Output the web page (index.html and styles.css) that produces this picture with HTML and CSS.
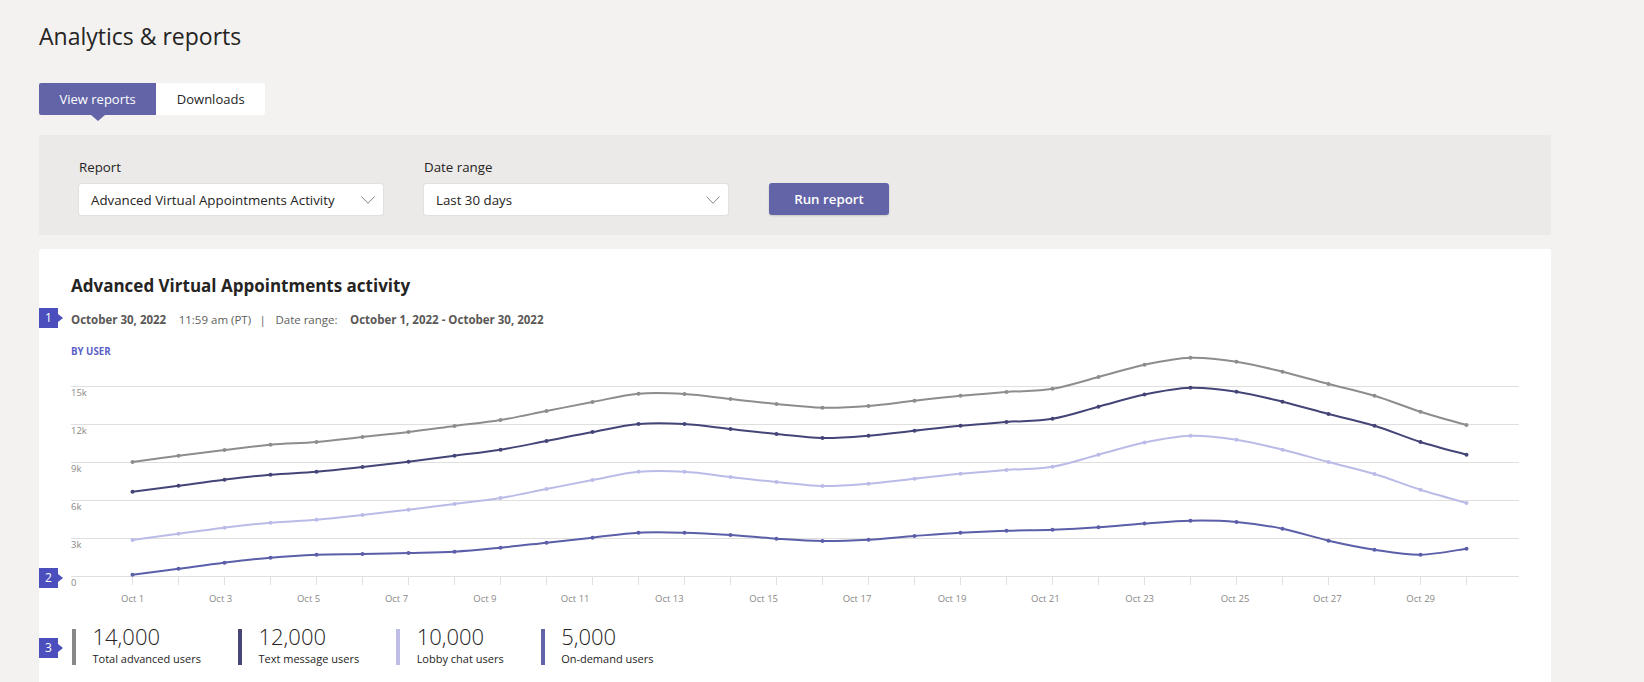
FILE: index.html
```html
<!DOCTYPE html>
<html lang="en">
<head>
<meta charset="utf-8">
<title>Analytics &amp; reports</title>
<link rel="stylesheet" href="styles.css">
</head>
<body>
<main class="page">
  <h1 class="page-title">Analytics &amp; reports</h1>
  <nav class="tabs">
    <button class="tab tab-active">View reports</button>
    <button class="tab tab-last">Downloads</button>
  </nav>

  <section class="filters">
    <div class="field">
      <label class="field-label">Report</label>
      <div class="select">
        <span class="select-value">Advanced Virtual Appointments Activity</span>
        <svg class="chev" width="14" height="8" viewBox="0 0 14 8"><polyline points="0.5,0.5 7,7.3 13.5,0.5"/></svg>
      </div>
    </div>
    <div class="field">
      <label class="field-label">Date range</label>
      <div class="select">
        <span class="select-value">Last 30 days</span>
        <svg class="chev" width="14" height="8" viewBox="0 0 14 8"><polyline points="0.5,0.5 7,7.3 13.5,0.5"/></svg>
      </div>
    </div>
    <button class="run-btn">Run report</button>
  </section>

  <section class="card">
    <h2 class="card-title">Advanced Virtual Appointments activity</h2>
    <div class="meta">
      <span class="badge badge-meta">1</span>
      <span class="meta-strong">October 30, 2022</span>
      <span>11:59 am (PT)</span>
      <span class="meta-pipe">|</span>
      <span>Date range:</span>
      <span class="meta-strong">October 1, 2022 - October 30, 2022</span>
    </div>
    <div class="by-user">BY USER</div>

    <div class="chart">
      <span class="badge badge-chart">2</span>
      <svg class="chart-svg" id="chart" viewBox="71 360 1448 250" width="1448" height="250">
        <g class="grid">
          <line x1="71" x2="1519" y1="386.5" y2="386.5"/>
          <line x1="71" x2="1519" y1="424.5" y2="424.5"/>
          <line x1="71" x2="1519" y1="462.5" y2="462.5"/>
          <line x1="71" x2="1519" y1="500.5" y2="500.5"/>
          <line x1="71" x2="1519" y1="538.5" y2="538.5"/>
          <line x1="71" x2="1519" y1="576.5" y2="576.5"/>
          <path id="ticks" d=""/>
        </g>
        <g class="y-labels">
          <text x="71" y="396">15k</text>
          <text x="71" y="434">12k</text>
          <text x="71" y="472">9k</text>
          <text x="71" y="510">6k</text>
          <text x="71" y="548">3k</text>
          <text x="71" y="586">0</text>
        </g>
        <g class="x-labels">
          <text x="132.7" y="602">Oct 1</text>
          <text x="220.6" y="602">Oct 3</text>
          <text x="308.6" y="602">Oct 5</text>
          <text x="396.5" y="602">Oct 7</text>
          <text x="484.9" y="602">Oct 9</text>
          <text x="575.2" y="602">Oct 11</text>
          <text x="669.4" y="602">Oct 13</text>
          <text x="763.7" y="602">Oct 15</text>
          <text x="857" y="602">Oct 17</text>
          <text x="952" y="602">Oct 19</text>
          <text x="1045.4" y="602">Oct 21</text>
          <text x="1139.7" y="602">Oct 23</text>
          <text x="1235" y="602">Oct 25</text>
          <text x="1327.4" y="602">Oct 27</text>
          <text x="1420.7" y="602">Oct 29</text>
        </g>
        <g id="series"></g>
      </svg>
    </div>

    <div class="legend">
      <span class="badge badge-legend">3</span>
      <div class="legend-item">
        <span class="legend-bar bar-total"></span>
        <div class="legend-text">
          <div class="legend-num">14,000</div>
          <div class="legend-label">Total advanced users</div>
        </div>
      </div>
      <div class="legend-item">
        <span class="legend-bar bar-text"></span>
        <div class="legend-text">
          <div class="legend-num">12,000</div>
          <div class="legend-label">Text message users</div>
        </div>
      </div>
      <div class="legend-item">
        <span class="legend-bar bar-lobby"></span>
        <div class="legend-text">
          <div class="legend-num">10,000</div>
          <div class="legend-label">Lobby chat users</div>
        </div>
      </div>
      <div class="legend-item">
        <span class="legend-bar bar-demand"></span>
        <div class="legend-text">
          <div class="legend-num">5,000</div>
          <div class="legend-label">On-demand users</div>
        </div>
      </div>
    </div>
  </section>
</main>
<script src="script.js"></script>
</body>
</html>
```

FILE: styles.css
```css
* { box-sizing: border-box; }
html, body { margin: 0; }
body {
  background: #f3f2f1;
  font-family: "Open Sans", "Noto Sans", "Liberation Sans", sans-serif;
  color: #252423;
}
.page { padding: 20px 93px 0 39px; }

.page-title {
  margin: 0;
  font-size: 23px;
  line-height: 32px;
  font-weight: 400;
  color: #252423;
}

.tabs { display: flex; margin-top: 31px; }
.tab {
  position: relative;
  height: 32px;
  padding: 0 20.5px;
  border: 0;
  margin: 0;
  font-family: inherit;
  font-size: 13px;
  line-height: 32px;
  background: #fff;
  color: #252423;
}
.tab-active { background: #6264a7; color: #fff; border-radius: 2px 0 0 2px; }
.tab-active::after {
  content: "";
  position: absolute;
  left: 50%;
  top: 100%;
  margin-left: -7px;
  border-left: 7px solid transparent;
  border-right: 7px solid transparent;
  border-top: 6px solid #6264a7;
}
.tab-last { border-radius: 0 3px 3px 0; }

.filters {
  margin-top: 20px;
  height: 100px;
  padding: 0 40px 20px;
  background: #ebeae8;
  display: flex;
  align-items: flex-end;
  gap: 41px;
}
.field { display: flex; flex-direction: column; }
.field-label {
  font-size: 13.3px;
  line-height: 18px;
  color: #252423;
  margin-bottom: 8px;
}
.select {
  width: 304px;
  height: 31px;
  background: #fff;
  border-radius: 3px;
  box-shadow: 0 0 0 1px #e3e1df, 0 1px 1px rgba(0,0,0,0.06);
  display: flex;
  align-items: center;
  justify-content: space-between;
  padding: 0 8.5px 0 12px;
}
.select-value { font-size: 13.3px; color: #252423; }
.chev { display: block; }
.chev polyline { fill: none; stroke: #8a8886; stroke-width: 1; }

.run-btn {
  width: 120px;
  height: 32px;
  border: 0;
  border-radius: 3px;
  background: #6264a7;
  color: #fff;
  font-family: inherit;
  font-size: 13.3px;
  font-weight: 600;
  box-shadow: 0 1px 2px rgba(0,0,0,0.15);
}

.card {
  margin-top: 14px;
  background: #fff;
  border-radius: 3px;
  padding: 25px 32px 40px;
}
.card-title {
  margin: 0;
  font-size: 17px;
  line-height: 24px;
  font-weight: 700;
  color: #252423;
}
.meta {
  position: relative;
  margin-top: 14px;
  display: flex;
  gap: 12.5px;
  font-size: 11.5px;
  line-height: 16px;
  color: #605e5c;
}
.meta-strong { font-weight: 700; color: #5a5856; }
.meta-pipe { margin: 0 -3px 0 -4px; }

.badge {
  position: absolute;
  left: -32px;
  width: 19px;
  height: 20px;
  background: #4a4fbd;
  color: #fff;
  font-size: 12px;
  line-height: 20px;
  text-align: center;
  font-weight: 400;
}
.badge::after {
  content: "";
  position: absolute;
  left: 100%;
  top: 5.5px;
  border-top: 4.5px solid transparent;
  border-bottom: 4.5px solid transparent;
  border-left: 5px solid #4a4fbd;
}
.badge-meta { top: -4px; }
.badge-chart { top: 208px; }
.badge-legend { top: 12px; }

.by-user {
  margin-top: 17px;
  font-size: 9.7px;
  line-height: 14px;
  font-weight: 700;
  color: #5b5fc7;
}

.chart { position: relative; margin-top: 1px; }
.chart-svg { display: block; overflow: visible; }
.grid line, .grid path { stroke: #e1dfdd; stroke-width: 1; fill: none; }
.y-labels text { font-size: 9.5px; fill: #8a8886; }
.x-labels text { font-size: 9.5px; fill: #8a8886; text-anchor: middle; }

.series-line { fill: none; stroke: currentColor; stroke-width: 2; }
.series-dot { fill: currentColor; }
.s-total { color: #8f8d8b; }
.s-text { color: #444577; }
.s-lobby { color: #bbbbe8; }
.s-demand { color: #5b5ea8; }

.legend {
  position: relative;
  margin-top: 16px;
  padding-left: 1px;
  display: flex;
  gap: 37px;
}
.legend-item { display: flex; align-items: flex-start; }
.legend-bar { width: 4px; height: 36px; margin-top: 3px; }
.bar-total { background: #8a8886; }
.bar-text { background: #464775; }
.bar-lobby { background: #bdbde6; }
.bar-demand { background: #6264a7; }
.legend-text { margin-left: 16.5px; }
.legend-num {
  margin-top: -1px;
  font-size: 22px;
  line-height: 22px;
  font-weight: 300;
  color: #252423;
}
.legend-label {
  margin-top: 4.5px;
  font-size: 11px;
  line-height: 14px;
  color: #252423;
}
```

FILE: script.js
```js
(function () {
  var NS = "http://www.w3.org/2000/svg";
  var X0 = 132.5, STEP = 46;

  var series = [
    { cls: "s-total", ys: [462.0,455.7,450.0,444.7,442.0,437.0,432.0,426.0,420.0,411.0,402.0,393.7,394.0,399.0,404.0,407.7,406.0,400.7,395.7,392.0,388.7,377.0,364.7,357.7,361.7,371.7,384.0,395.7,411.7,425.0] },
    { cls: "s-text", ys: [491.7,485.7,479.7,474.7,471.7,467.0,461.7,455.7,449.7,441.0,432.0,424.0,424.0,429.0,434.0,438.0,435.7,430.7,425.7,422.0,418.7,406.7,394.5,387.7,391.7,401.7,414.0,425.7,442.0,454.7] },
    { cls: "s-lobby", ys: [540.0,533.7,527.7,522.7,519.7,515.0,509.7,504.0,498.0,489.0,480.0,471.7,471.7,477.0,482.0,486.0,483.7,478.7,473.7,470.0,466.7,454.7,442.5,435.7,439.7,449.7,462.0,474.0,489.7,503.0] },
    { cls: "s-demand", ys: [574.7,568.7,562.7,557.7,554.7,554.0,553.0,551.7,547.7,542.7,537.7,532.7,532.7,535.0,538.7,541.0,539.7,536.0,532.7,530.7,529.7,527.3,523.6,520.7,522.0,528.7,540.7,549.7,554.7,548.7] }
  ];

  var ticks = document.getElementById("ticks");
  var td = "";
  for (var i = 0; i < 30; i++) {
    var x = X0 + STEP * i;
    td += "M" + x + " 576.5V585";
  }
  ticks.setAttribute("d", td);

  function curve(pts) {
    var d = "M" + pts[0][0] + "," + pts[0][1];
    for (var i = 0; i < pts.length - 1; i++) {
      var p0 = pts[i - 1] || pts[i];
      var p1 = pts[i];
      var p2 = pts[i + 1];
      var p3 = pts[i + 2] || p2;
      var c1x = p1[0] + (p2[0] - p0[0]) / 6;
      var c1y = p1[1] + (p2[1] - p0[1]) / 6;
      var c2x = p2[0] - (p3[0] - p1[0]) / 6;
      var c2y = p2[1] - (p3[1] - p1[1]) / 6;
      d += "C" + c1x.toFixed(2) + "," + c1y.toFixed(2) + " " +
           c2x.toFixed(2) + "," + c2y.toFixed(2) + " " + p2[0] + "," + p2[1];
    }
    return d;
  }

  var root = document.getElementById("series");
  series.forEach(function (s) {
    var g = document.createElementNS(NS, "g");
    g.setAttribute("class", s.cls);
    var pts = s.ys.map(function (y, i) { return [X0 + STEP * i, y]; });
    var path = document.createElementNS(NS, "path");
    path.setAttribute("class", "series-line");
    path.setAttribute("d", curve(pts));
    g.appendChild(path);
    pts.forEach(function (p) {
      var c = document.createElementNS(NS, "circle");
      c.setAttribute("class", "series-dot");
      c.setAttribute("cx", p[0]);
      c.setAttribute("cy", p[1]);
      c.setAttribute("r", 2);
      g.appendChild(c);
    });
    root.appendChild(g);
  });
})();
```
